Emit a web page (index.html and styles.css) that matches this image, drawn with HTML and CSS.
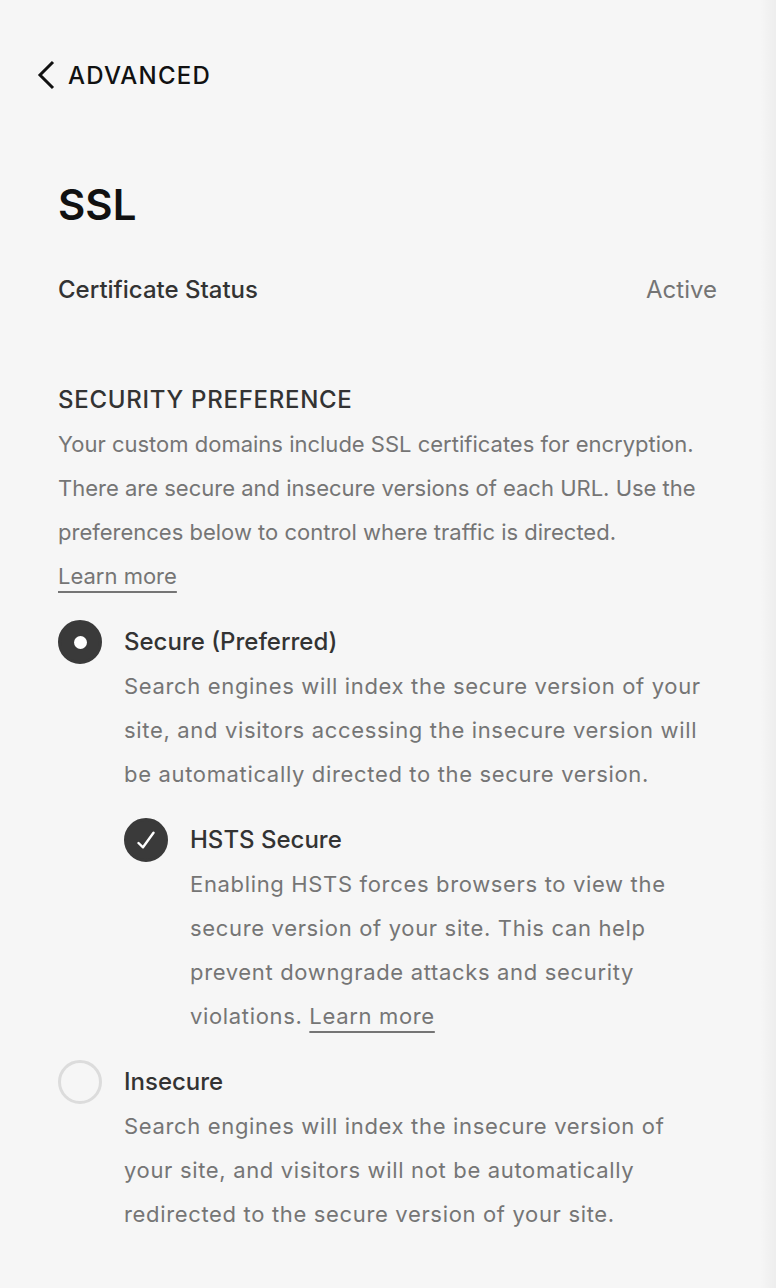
FILE: index.html
```html
<!DOCTYPE html>
<html lang="en">
<head>
<meta charset="utf-8">
<title>SSL</title>
<link rel="stylesheet" href="styles.css">
</head>
<body>
<div class="page">
  <div class="back">
    <svg class="chev" width="22" height="30" viewBox="0 0 22 30" aria-hidden="true"><path d="M19 2 L6 15 L19 28" fill="none" stroke="#111" stroke-width="3"/></svg>
    <span class="back-label">ADVANCED</span>
  </div>
  <h1 class="title">SSL</h1>
  <div class="status-row">
    <span class="status-label">Certificate Status</span>
    <span class="status-value">Active</span>
  </div>
  <h2 class="section-title">SECURITY PREFERENCE</h2>
  <p class="text">Your custom domains include SSL certificates for encryption. There are secure and insecure versions of each URL. Use the preferences below to control where traffic is directed.<br><a class="link" href="#">Learn more</a></p>

  <div class="option">
    <span class="radio checked"><span class="dot"></span></span>
    <div class="option-body">
      <div class="option-title">Secure (Preferred)</div>
      <p class="text desc">Search engines will index the secure version of your site, and visitors accessing the insecure version will be automatically directed to the secure version.</p>
      <div class="option sub">
        <span class="radio checked"><svg width="18" height="18" viewBox="0 0 18 18" aria-hidden="true"><path d="M1.5 12 L6 16.3 L16.5 1.8" fill="none" stroke="#fff" stroke-width="2.4" stroke-linecap="round" stroke-linejoin="round"/></svg></span>
        <div class="option-body">
          <div class="option-title">HSTS Secure</div>
          <p class="text desc">Enabling HSTS forces browsers to view the secure version of your site. This can help prevent downgrade attacks and security violations. <a class="link" href="#">Learn more</a></p>
        </div>
      </div>
    </div>
  </div>

  <div class="option">
    <span class="radio"></span>
    <div class="option-body">
      <div class="option-title">Insecure</div>
      <p class="text desc">Search engines will index the insecure version of your site, and visitors will not be automatically redirected to the secure version of your site.</p>
    </div>
  </div>
</div>
</body>
</html>
```

FILE: styles.css
```css
html {
  background: linear-gradient(to left, rgba(0,0,0,0.035), rgba(0,0,0,0) 16px), #f6f6f6;
  min-height: 100%;
}
body {
  margin: 0;
  font-family: Inter, "Liberation Sans", sans-serif;
  color: #333;
}
.page {
  padding: 53px 59px 40px 58px;
}
.back {
  display: flex;
  align-items: center;
  height: 44px;
  margin-left: -24px;
  gap: 12px;
}
.chev { display: block; }
.back-label {
  font-size: 24px;
  font-weight: 500;
  letter-spacing: 0.05em;
  color: #111;
}
.title {
  margin: 78px 0 0;
  font-size: 42px;
  line-height: 60px;
  font-weight: 600;
  color: #111;
}
.status-row {
  margin-top: 33px;
  display: flex;
  justify-content: space-between;
  line-height: 44px;
  font-size: 24px;
}
.status-label { font-weight: 500; color: #333; }
.status-value { color: #747474; }
.section-title {
  margin: 66px 0 0;
  font-size: 24px;
  line-height: 44px;
  font-weight: 500;
  letter-spacing: 0.03em;
  color: #333;
}
.text {
  margin: 0;
  font-size: 22px;
  line-height: 44px;
  color: #757575;
}
.desc {
  letter-spacing: 0.03em;
}
.link {
  color: #757575;
  text-decoration: underline;
  text-decoration-thickness: 2px;
  text-underline-offset: 7px;
}
.option {
  display: flex;
  gap: 22px;
  margin-top: 22px;
}
.radio {
  flex: none;
  width: 44px;
  height: 44px;
  border-radius: 50%;
  box-sizing: border-box;
  border: 3px solid #dcdcdc;
  display: flex;
  align-items: center;
  justify-content: center;
}
.radio.checked {
  background: #3a3a3a;
  border-color: #3a3a3a;
}
.dot {
  width: 13px;
  height: 13px;
  border-radius: 50%;
  background: #fff;
}
.option-body { flex: 1; min-width: 0; }
.option-title {
  font-size: 24px;
  line-height: 44px;
  font-weight: 500;
  color: #333;
}
```
